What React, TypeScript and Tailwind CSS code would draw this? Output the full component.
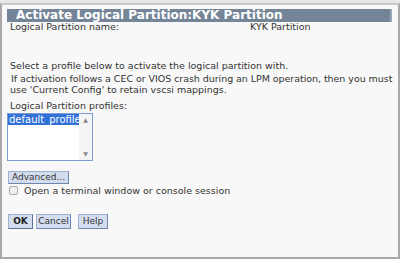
export default function App() {
  const font = { fontFamily: '"DejaVu Sans", Verdana, sans-serif' };
  return (
    <div className="w-[400px] h-[259px] bg-[#e6e6e6] pt-[3px]" style={font}>
      <div className="h-[256px] bg-[#f8f8f8] border-2 border-[#a9a9a9] border-t-[#c8c8c8] px-[5px] pt-[4px] text-[#333] text-[9.5px] leading-[11px]">
        <div className="bg-[#748597] h-[13px] mr-[1px] pl-[9px] text-white font-bold text-[12px] leading-[13px] border-r-2 border-[#9aa8b6] whitespace-nowrap">
          Activate Logical Partition:KYK Partition
        </div>
        <div className="flex pl-[3px] mt-[-1px]">
          <span className="w-[240px]">Logical Partition name:</span>
          <span>KYK Partition</span>
        </div>
        <div className="pl-[3px] mt-[28px]">
          Select a profile below to activate the logical partition with.
        </div>
        <div className="pl-[4px] mt-[2px] whitespace-nowrap tracking-[-0.05px]">
          If activation follows a CEC or VIOS crash during an LPM operation, then you must
        </div>
        <div className="pl-[3px]">use 'Current Config' to retain vscsi mappings.</div>
        <div className="pl-[3px] mt-[5px]">Logical Partition profiles:</div>
        <div className="mt-[2px] w-[86px] h-[48px] border border-[#7a9cd3] bg-white flex">
          <div className="flex-1 min-w-0">
            <div className="inline-block bg-[#3170d7] text-white text-[10px] leading-[11px] px-[1px] whitespace-nowrap">default_profile</div>
          </div>
          <div className="w-[13px] shrink-0 bg-[#f4f4f4] flex flex-col justify-between items-center py-[3px] text-[#888] text-[6px] leading-[6px]">
            <span>▲</span>
            <span>▼</span>
          </div>
        </div>
        <div className="mt-[10px] ml-[1px] flex">
          <button className="h-[13px] px-[3px] bg-[#d4dded] border border-[#9fb1cc] border-b-[#6f87ac] border-r-[#6f87ac] text-[#333] text-[9px] leading-[11px]">
            Advanced...
          </button>
        </div>
        <div className="flex items-center mt-[1px] ml-[2px]">
          <span className="w-[9px] h-[9px] border border-[#aaa] bg-[#f0f0f0] rounded-[2px] mr-[6px]" />
          <span>Open a terminal window or console session</span>
        </div>
        <div className="flex mt-[18px] ml-[1px]">
          <button className="h-[15px] w-[25px] bg-[#d4dded] border border-[#9fb1cc] border-b-[#5c7396] border-r-[#5c7396] font-bold text-[9px] text-[#222]">OK</button>
          <button className="ml-[3px] h-[15px] w-[35px] bg-[#d4dded] border border-[#9fb1cc] border-b-[#6f87ac] border-r-[#6f87ac] text-[9px] text-[#333]">Cancel</button>
          <button className="ml-[7px] h-[15px] w-[30px] bg-[#d4dded] border border-[#9fb1cc] border-b-[#6f87ac] border-r-[#6f87ac] text-[9px] text-[#333]">Help</button>
        </div>
      </div>
    </div>
  );
}
